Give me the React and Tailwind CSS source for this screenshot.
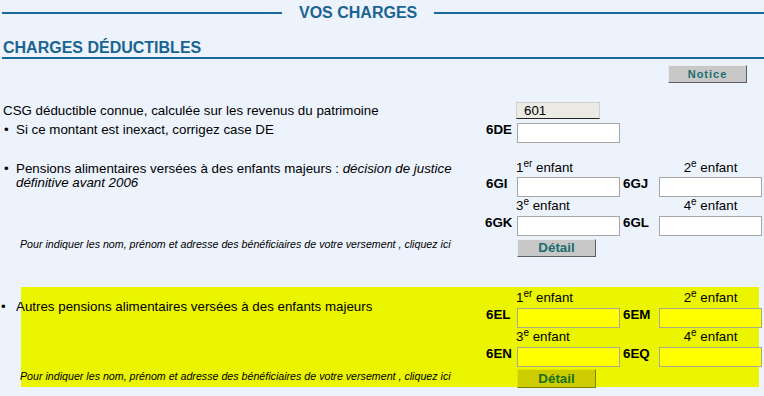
import { useState } from 'react';

// -----------------------------------
// Small building blocks
// -----------------------------------

function Field({ yellow = false }) {
  const [value, setValue] = useState('');

  return (
    <input
      type="text"
      value={value}
      onChange={(e) => setValue(e.target.value)}
      className={
        yellow
          ? 'h-[20px] w-[103px] border border-[#a9a98c] bg-[#ffff00] px-1 text-[13.33px] outline-none'
          : 'h-[20px] w-[103px] border border-[#a6a6a6] bg-white px-1 text-[13.33px] outline-none'
      }
    />
  );
}

function Code({ children, className = '' }) {
  return (
    <span className={`self-center text-[13.33px] font-bold leading-none text-black ${className}`}>
      {children}
    </span>
  );
}

function Child({ n, sup, center = false, className = '' }) {
  return (
    <span
      className={`text-[13.33px] leading-[15px] text-black ${
        center ? 'text-center' : 'text-left'
      } ${className}`}
    >
      {n}
      <sup>{sup}</sup> enfant
    </span>
  );
}

function GrayButton({ children }) {
  return (
    <button
      type="button"
      className="h-[18px] w-[79px] border border-t-[#ececec] border-l-[#ececec] border-r-[#5f5f5f] border-b-[#5f5f5f] bg-[#c8c8c8] text-[13.33px] font-bold leading-none text-[#1b6e6e]"
    >
      {children}
    </button>
  );
}

function YellowButton({ children }) {
  return (
    <button
      type="button"
      className="h-[19px] w-[79px] border border-t-[#e6e600] border-l-[#e6e600] border-r-[#7f7f00] border-b-[#7f7f00] bg-[#cccc00] text-[13.33px] font-bold leading-none text-[#187018]"
    >
      {children}
    </button>
  );
}

const hint =
  'Pour indiquer les nom, prénom et adresse des bénéficiaires de votre versement , cliquez ici';

export default function App() {
  return (
    <div className="min-h-[396px] w-full overflow-hidden bg-[#ecf3fd] pl-[2px] font-['Liberation_Sans',Arial,sans-serif] text-black">
      {/* -------------------------------- */}
      {/* Titles */}
      {/* -------------------------------- */}

      <div className="flex h-[22px] items-center pt-[4px]">
        <div className="h-[2px] w-[280px] bg-[#186b98]" />
        <h1 className="ml-[17px] text-[16px] font-bold leading-[18px] text-[#1b6390]">
          VOS CHARGES
        </h1>
        <div className="ml-[17px] h-[2px] flex-1 bg-[#186b98]" />
      </div>

      <h2 className="mt-[17px] border-b-2 border-[#186b98] pl-[1px] text-[16px] font-bold leading-[18px] text-[#1b6390]">
        CHARGES DÉDUCTIBLES
      </h2>

      <div className="mt-[6px] flex justify-end pr-[17px]">
        <button
          type="button"
          className="h-[18px] w-[79px] border border-t-[#ececec] border-l-[#ececec] border-r-[#5f5f5f] border-b-[#5f5f5f] bg-[#c8c8c8] text-[11px] font-bold leading-none tracking-[1px] text-[#1b6e6e]"
        >
          Notice
        </button>
      </div>

      {/* -------------------------------- */}
      {/* CSG */}
      {/* -------------------------------- */}

      <div className="mt-[19px] grid grid-cols-[482px_33px_103px_39px_103px] grid-rows-[18px_20px]">
        <p className="col-start-1 row-start-1 self-center pl-[1px] text-[13.33px] leading-[14px]">
          CSG déductible connue, calculée sur les revenus du patrimoine
        </p>
        <div className="col-start-3 row-start-1 flex h-[17px] w-[84px] -ml-[1px] items-center border border-b-[#222] border-t-[#cfcfcf] border-l-[#cfcfcf] border-r-[#cfcfcf] bg-[#ebeae4] pl-[7px] text-[13.33px] leading-none">
          601
        </div>

        <p className="col-start-1 row-start-2 flex self-center text-[13.33px] leading-[14px]">
          <span className="w-[14px] pl-[2px]">•</span>
          Si ce montant est inexact, corrigez case DE
        </p>
        <Code className="col-start-2 row-start-2 pl-[2px]">6DE</Code>
        <div className="col-start-3 row-start-2">
          <Field />
        </div>
      </div>

      {/* -------------------------------- */}
      {/* Pensions - décision de justice */}
      {/* -------------------------------- */}

      <div className="mt-[20px] grid grid-cols-[482px_33px_103px_39px_103px] grid-rows-[14px_20px_19px_20px_20px]">
        <p className="col-start-1 row-start-1 row-span-4 mt-[2px] flex text-[13.33px] leading-[14px]">
          <span className="w-[14px] shrink-0 pl-[2px]">•</span>
          <span>
            Pensions alimentaires versées à des enfants majeurs :{' '}
            <i>
              décision de justice
              <br />
              définitive avant 2006
            </i>
          </span>
        </p>

        <Child n="1" sup="er" className="col-start-3 row-start-1 -ml-[1px] leading-[14px]" />
        <Child n="2" sup="e" center className="col-start-5 row-start-1 leading-[14px]" />

        <Code className="col-start-2 row-start-2 pl-[2px]">6GI</Code>
        <div className="col-start-3 row-start-2">
          <Field />
        </div>
        <Code className="col-start-4 row-start-2 pl-[3px]">6GJ</Code>
        <div className="col-start-5 row-start-2">
          <Field />
        </div>

        <Child n="3" sup="e" className="col-start-3 row-start-3 -ml-[1px] self-end" />
        <Child n="4" sup="e" center className="col-start-5 row-start-3 self-end" />

        <Code className="col-start-2 row-start-4 pl-[1px]">6GK</Code>
        <div className="col-start-3 row-start-4">
          <Field />
        </div>
        <Code className="col-start-4 row-start-4 pl-[3px]">6GL</Code>
        <div className="col-start-5 row-start-4">
          <Field />
        </div>

        <p className="col-start-1 row-start-5 self-center whitespace-nowrap pl-[18px] pt-[2px] text-[10.67px] italic leading-[12px]">
          {hint}
        </p>
        <div className="col-start-3 row-start-5 pt-[2px]">
          <GrayButton>Détail</GrayButton>
        </div>
      </div>

      {/* -------------------------------- */}
      {/* Autres pensions (yellow) */}
      {/* -------------------------------- */}

      <div className="ml-[19px] mt-[34px] w-[738px] bg-[#ebf500] pb-[2px] pt-[3px]">
        <div className="grid grid-cols-[463px_33px_103px_39px_103px] grid-rows-[15px_20px_19px_20px_21px]">
          <p className="col-start-1 row-start-1 row-span-2 -ml-[20px] mt-[10px] flex text-[13.33px] leading-[14px]">
            <span className="w-[15px] shrink-0">•</span>
            Autres pensions alimentaires versées à des enfants majeurs
          </p>

          <Child n="1" sup="er" className="col-start-3 row-start-1 -ml-[1px]" />
          <Child n="2" sup="e" center className="col-start-5 row-start-1" />

          <Code className="col-start-2 row-start-2 pl-[2px]">6EL</Code>
          <div className="col-start-3 row-start-2">
            <Field yellow />
          </div>
          <Code className="col-start-4 row-start-2 pl-[3px]">6EM</Code>
          <div className="col-start-5 row-start-2">
            <Field yellow />
          </div>

          <Child n="3" sup="e" className="col-start-3 row-start-3 -ml-[1px] self-end" />
          <Child n="4" sup="e" center className="col-start-5 row-start-3 self-end" />

          <Code className="col-start-2 row-start-4 pl-[2px]">6EN</Code>
          <div className="col-start-3 row-start-4">
            <Field yellow />
          </div>
          <Code className="col-start-4 row-start-4 pl-[3px]">6EQ</Code>
          <div className="col-start-5 row-start-4">
            <Field yellow />
          </div>

          <p className="col-start-1 row-start-5 -ml-[1px] self-center whitespace-nowrap pt-[3px] text-[10.67px] italic leading-[12px]">
            {hint}
          </p>
          <div className="col-start-3 row-start-5 pt-[2px]">
            <YellowButton>Détail</YellowButton>
          </div>
        </div>
      </div>
    </div>
  );
}
